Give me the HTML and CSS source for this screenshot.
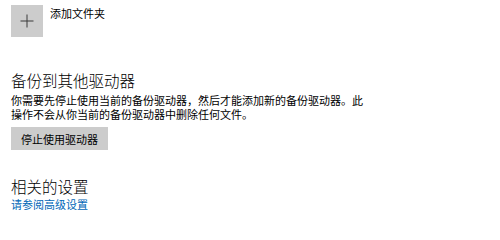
FILE: index.html
```html
<!DOCTYPE html>
<html lang="zh-CN">
<head>
<meta charset="utf-8">
<link rel="stylesheet" href="styles.css">
</head>
<body>
<div class="page">
  <div class="add-row">
    <div class="add-box">
      <svg width="14" height="14" viewBox="0 0 14 14"><path d="M7 0.5V13.5M0.5 7H13.5" stroke="#3a3a3a" stroke-width="1" fill="none"/></svg>
    </div>
    <div class="add-label">添加文件夹</div>
  </div>
  <h2 class="heading first">备份到其他驱动器</h2>
  <p class="desc">你需要先停止使用当前的备份驱动器，然后才能添加新的备份驱动器。此操作不会从你当前的备份驱动器中删除任何文件。</p>
  <button class="btn">停止使用驱动器</button>
  <h2 class="heading second">相关的设置</h2>
  <a class="link" href="#">请参阅高级设置</a>
</div>
</body>
</html>
```
FILE: styles.css
```css
html, body {
  margin: 0;
  padding: 0;
  background: #ffffff;
}
body {
  font-family: "Noto Sans CJK SC", "Noto Sans", sans-serif;
  color: #000000;
}
.page {
  padding: 5px 0 0 11px;
  display: flex;
  flex-direction: column;
  align-items: flex-start;
}
.add-row {
  display: flex;
  align-items: flex-start;
  gap: 7px;
}
.add-box {
  width: 32px;
  height: 32px;
  background: #cccccc;
  display: flex;
  align-items: center;
  justify-content: center;
}
.add-label {
  font-size: 11px;
  line-height: 14px;
  margin-top: 1px;
}
.heading {
  font-size: 15.5px;
  font-weight: 300;
  line-height: 20px;
  margin: 0;
}
.heading.first {
  margin-top: 33px;
}
.heading.second {
  margin-top: 26px;
}
.desc {
  font-size: 11px;
  line-height: 14px;
  margin: 3px 0 0;
  width: 354px;
}
.btn {
  margin-top: 6px;
  width: 97px;
  height: 23px;
  border: none;
  background: #cccccc;
  font-family: inherit;
  font-size: 11px;
  color: #000000;
  padding: 0;
}
.link {
  margin-top: 1px;
  font-size: 11px;
  line-height: 14px;
  color: #0067b8;
  text-decoration: none;
}
```
